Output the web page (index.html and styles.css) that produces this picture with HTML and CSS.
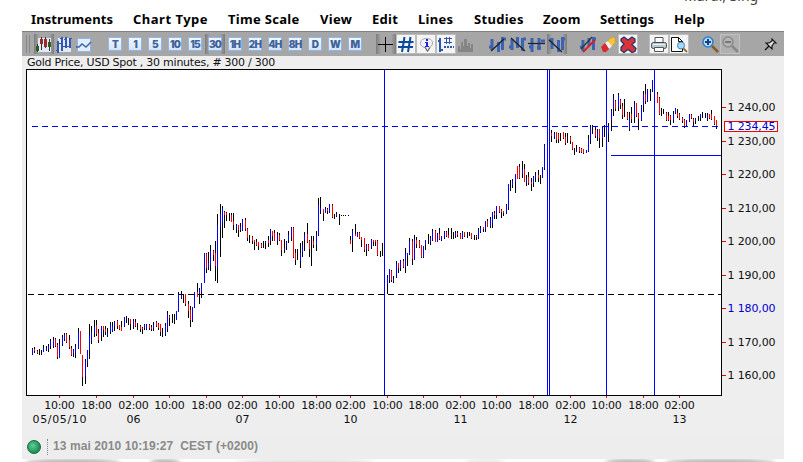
FILE: index.html
```html
<!DOCTYPE html>
<html lang="en">
<head>
  <meta charset="UTF-8" />
  <meta name="viewport" content="width=device-width, initial-scale=1" />
  <title>Gold Price, USD Spot</title>

  <link rel="stylesheet" href="styles.css">
</head>
<body>

  <div class="top-text">Mardi, Sing</div>

  <div class="window">
    <nav class="menu">
      <span class="m1">Instruments</span>
      <span class="m2">Chart Type</span>
      <span class="m3">Time Scale</span>
      <span class="m4">View</span>
      <span class="m5">Edit</span>
      <span class="m6">Lines</span>
      <span class="m7">Studies</span>
      <span class="m8">Zoom</span>
      <span class="m9">Settings</span>
      <span class="m10">Help</span>
    </nav>

    <div class="toolbar">
      <div class="grip"></div>

      <div class="group">
        <div class="tool sunk">
          <svg width="20" height="20" shape-rendering="crispEdges">
            <rect x="4" y="4" width="13" height="14" fill="#dfe9f8" />
            <path d="M3.5 10v8M7.5 3v13M11.5 3v11M15.5 5v12" stroke="#333" />
            <rect x="2" y="12" width="3" height="5" fill="#24601c" />
            <rect x="6" y="5" width="3" height="5" fill="#9c2a2a" />
            <rect x="10" y="5" width="3" height="8" fill="#9c2a2a" />
            <rect x="14" y="8" width="3" height="5" fill="#24601c" />
          </svg>
        </div>
        <div class="tool">
          <svg width="20" height="20" shape-rendering="crispEdges">
            <rect x="4" y="4" width="13" height="14" fill="#dfe9f8" />
            <path d="M4 7v12M8 3v14M12 3v11M16 4v10" stroke="#3458b0" stroke-width="1.600" />
            <path d="M2 16.500h2M4 9.500h3M6 4.500h2M8 12.500h3M10 5.500h2M13 12.500h3M16 4.500h2" stroke="#3458b0" />
          </svg>
        </div>
        <div class="tool">
          <svg width="20" height="20">
            <rect x="3.5" y="4.500" width="13" height="13" fill="#e3eefb" stroke="#8fb4e6" />
            <path d="M2 13l3 0 3-3 4 3 5-5" stroke="#3c65a8" stroke-width="1.4" fill="none" />
          </svg>
        </div>
      </div>

      <div class="group">
        <div class="tool"><b class="key">T</b></div>
        <div class="tool"><b class="key">1</b></div>
        <div class="tool"><b class="key">5</b></div>
        <div class="tool"><b class="key">10</b></div>
        <div class="tool"><b class="key">15</b></div>
        <div class="tool sunk"><b class="key">30</b></div>
        <div class="tool"><b class="key">1H</b></div>
        <div class="tool"><b class="key">2H</b></div>
        <div class="tool"><b class="key">4H</b></div>
        <div class="tool"><b class="key">8H</b></div>
        <div class="tool"><b class="key">D</b></div>
        <div class="tool"><b class="key">W</b></div>
        <div class="tool"><b class="key">M</b></div>
      </div>

      <div class="group">
        <div class="tool sunk">
          <svg width="20" height="20" shape-rendering="crispEdges"><path d="M2 10.500h15M9.500 3v15" stroke="#000" /></svg>
        </div>
        <div class="tool lit">
          <svg width="20" height="20"><path d="M8.500 3L6 18M14.500 3L12 18M2.500 8h15M2 13h15" stroke="#0b4b9c" stroke-width="2" /></svg>
        </div>
        <div class="tool lit">
          <svg width="20" height="20">
            <path d="M10.500 4.500c4 0 6 2 6 4.500s-2 4-3.500 4.500L11.500 17 9 13.500C6 13 4.500 11.500 4.500 9s2-4.500 6-4.500z" fill="#f2f2f6" stroke="#aaa" />
            <path d="M14 13.500l-2.500 4L9 13" fill="none" stroke="#555" />
            <path d="M10 5h2v2h-2zM9 8h3v4h1v1H9v-1h1V9H9z" fill="#1f24e8" />
          </svg>
        </div>
        <div class="tool lit">
          <svg width="20" height="20" shape-rendering="crispEdges">
            <path d="M4 4v14" stroke="#2b56b0" stroke-width="2" />
            <path d="M2 6.500h2M5 15.500h2" stroke="#2b56b0" stroke-width="2" />
            <path d="M10.500 3v7M13.500 3v7M8 4.500h8M8 8.500h8" stroke="#3458a8" />
            <path d="M8 13h10" stroke="#2b56b0" stroke-width="2" stroke-dasharray="2 1" />
          </svg>
        </div>
        <div class="tool">
          <svg width="20" height="20" shape-rendering="crispEdges"><path d="M2 18v-6h2v3h1V8h2v4h1V5h3v7h1V9h2v5h1v-4h2v8z" fill="#858585" /></svg>
        </div>
      </div>

      <div class="group">
        <div class="tool">
          <svg width="20" height="20">
            <path d="M5 5v11M11.500 8v10M15.500 3v13M2 13h3M16 5h3" stroke="#3c62b4" stroke-width="3" />
            <path d="M4 17L17 5" stroke="#222" stroke-width="1.300" />
          </svg>
        </div>
        <div class="tool">
          <svg width="20" height="20">
            <path d="M5 5v11M10.500 3v11M15.500 4v13M2 13h3M16 5h3" stroke="#3c62b4" stroke-width="3" />
            <path d="M4 4l14 13" stroke="#222" stroke-width="1.300" />
          </svg>
        </div>
        <div class="tool">
          <svg width="20" height="20">
            <path d="M5 4v14M12 4v12M2 13h4M10 14h4M14 7h4" stroke="#3c62b4" stroke-width="3" />
            <path d="M1 9.500h17" stroke="#222" stroke-width="1.300" />
          </svg>
        </div>
        <div class="tool sunk">
          <svg width="20" height="20">
            <path d="M5 4v11M11.500 6v12M15.500 3v13M2 6h3M15 5h3" stroke="#3c62b4" stroke-width="3" />
            <path d="M2 6l13 12" stroke="#222" stroke-width="1.300" />
          </svg>
        </div>
      </div>

      <div class="group">
        <div class="tool">
          <svg width="20" height="20">
            <path d="M5 6v11M11 4v8M15.500 3v13M2 13h3M15 5h3" stroke="#3c62b4" stroke-width="3" />
            <path d="M3 15L14 3" stroke="#333" stroke-width="1.200" />
            <path d="M5 18L17 6" stroke="#d32020" stroke-width="1.800" />
          </svg>
        </div>
        <div class="tool">
          <svg width="20" height="20">
            <path d="M10 6l5-3 2 1v5l-4 4z" fill="#f6c634" stroke="#d99a1c" stroke-width=".7" />
            <path d="M7 9l3-2 4 5-3 3z" fill="#f2eef0" />
            <path d="M3 13l4-4 4 6-3 3-3 0z" fill="#d92a30" />
          </svg>
        </div>
        <div class="tool lit">
          <svg width="20" height="20"><path d="M3 5l3-2 4 3 4-3 3 2v3l-3 2.500 4 4-1 3-3 1-4-3-4 3-3-2v-3l3-3.500-3-3z" fill="#d93238" stroke="#24386f" stroke-width="1.300" /></svg>
        </div>
      </div>

      <div class="group">
        <div class="tool lit">
          <svg width="20" height="20">
            <path d="M6 9V3.500h8V9z" fill="#fff" stroke="#555" />
            <rect x="2.500" y="8.500" width="15" height="6" rx="2" fill="#b9cdd0" stroke="#445" />
            <path d="M4 10.500h12" stroke="#e9f4f4" />
            <path d="M5.500 13.500h9v4h-9z" fill="#fff" stroke="#555" />
          </svg>
        </div>
        <div class="tool lit">
          <svg width="20" height="20">
            <path d="M2.500 3.500h7l4 4v10h-11z" fill="#fff" stroke="#111" />
            <path d="M9.500 3.500v4h4" fill="none" stroke="#111" />
            <path d="M14 14l4 4" stroke="#9a6a35" stroke-width="2" />
            <circle cx="12" cy="11.500" r="3.500" fill="#a7d8f5" stroke="#3d82b8" />
          </svg>
        </div>
      </div>

      <div class="group">
        <div class="tool">
          <svg width="20" height="20">
            <path d="M12 12l6 6" stroke="#8a5a20" stroke-width="2.500" />
            <circle cx="8" cy="8" r="5" fill="#b7def8" stroke="#2f7fd0" stroke-width="1.600" />
            <path d="M8 5v6M5 8h6" stroke="#123f86" stroke-width="2" />
          </svg>
        </div>
        <div class="tool off">
          <svg width="20" height="20">
            <path d="M12 12l6 6" stroke="#888" stroke-width="2.500" />
            <circle cx="8" cy="8" r="5" fill="#b4b4b4" stroke="#8c8c8c" stroke-width="1.600" />
            <path d="M5 8h6" stroke="#777" stroke-width="2" />
          </svg>
        </div>
      </div>

      <div class="tool pin">
        <svg width="20" height="20">
          <path d="M5 16l4-4" stroke="#111" stroke-width="1.200" />
          <path d="M6 9l3 0 3-2 0-2 4 4-2 0-2 3 0 3z" fill="#ddd" stroke="#111" stroke-width="1.100" />
        </svg>
      </div>
    </div>

    <div class="chart-title"><span>Gold Price, USD Spot , 30 minutes, # 300 / 300</span></div>

    <svg class="chart" id="chart" width="762" height="365" viewBox="22 69 762 365">
      <rect class="plot" x="26.500" y="69.500" width="695" height="326" />
      <g id="bars" shape-rendering="crispEdges"></g>
      <g shape-rendering="crispEdges">
        <path class="dash" d="M28 294.500H721" />
        <path class="dash blue" d="M32 126.500H718" />
        <path class="line" d="M384.500 70V395M547.500 70V395M549.500 70V395M606.500 70V395M654.500 70V395M611 155.500H721" />
      </g>
      <g id="axes"></g>
      <rect class="last-box" x="724.500" y="121.500" width="53" height="10" />
      <text class="last" x="727.500" y="130" textLength="48">1 234,45</text>
    </svg>

    <footer class="status">
      <span class="lamp"></span>
      <span class="dots"></span>
      <span class="clock">13 mai 2010 10:19:27&nbsp; CEST (+0200)</span>
    </footer>
  </div>

  <div class="shade">
    <i class="s1"></i><i class="s2"></i><i class="s3"></i><i class="s4"></i><i class="s5"></i><i class="s6"></i>
  </div>

  <script src="chart.js"></script>
</body>
</html>
```

FILE: styles.css
```css
body {
  margin: 0;
  height: 462px;
  background: #fff;
  overflow: hidden;
  position: relative;
}

.top-text {
  position: absolute;
  left: 684px;
  top: -14px;
  font: 14px/20px "Noto Sans", sans-serif;
  color: #444;
  white-space: nowrap;
}

.window {
  width: 762px;
  margin-left: 22px;
}

.menu {
  display: flex;
  height: 31px;
  padding: 9px 0 0 9px;
  box-sizing: border-box;
  font: bold 13px/20px "Noto Sans", "Open Sans", sans-serif;
  letter-spacing: 0.3px;
  color: #000;
  white-space: nowrap;
}

.menu span {
  flex: none;
}

.m1 { width: 102px; letter-spacing: 0.1px; }
.m2 { width: 95px; letter-spacing: 0.5px; }
.m3 { width: 92px; }
.m4 { width: 52px; }
.m5 { width: 46px; }
.m6 { width: 56px; }
.m7 { width: 69px; }
.m8 { width: 57px; }
.m9 { width: 74px; letter-spacing: 0.1px; }

.toolbar {
  display: flex;
  height: 25px;
  padding: 2px 4px 0 4px;
  box-sizing: border-box;
  background: #a6a6a6;
  border-top: 1px solid #808080;
  gap: 11px;
}

.grip {
  width: 1px;
  height: 18px;
  margin: 1px -7px 0 0;
  border-left: 1px solid #888;
  border-right: 1px solid #888;
  padding-right: 1px;
}

.group {
  display: flex;
}

.tool {
  width: 20px;
  height: 20px;
  display: flex;
  align-items: center;
  justify-content: center;
}

.sunk {
  background: linear-gradient(to right, #7c7c7c, #a6a6a6 25%, #a6a6a6 75%, #7c7c7c);
}

.lit {
  background: #f4f4f4;
  box-shadow: inset 0 0 0 1px #bcbcbc;
}

.off {
  background: #b0b0b0;
  box-shadow: inset 0 0 0 1px #c0c0c0;
}

.pin {
  margin-left: auto;
}

.key {
  width: 14px;
  height: 14px;
  box-sizing: border-box;
  border: 1px solid #8fb6ea;
  background: linear-gradient(#f3f8ff, #d4e4f8);
  color: #41639a;
  font: 900 10px/12px Inter, "Liberation Sans", sans-serif;
  letter-spacing: -0.8px;
  text-align: center;
  display: flex;
  justify-content: center;
}

.chart-title {
  height: 13px;
  padding-left: 5px;
  background: #eee;
  font: 11px/13px "DejaVu Sans", sans-serif;
  letter-spacing: -0.25px;
  color: #111;
  white-space: nowrap;
}

.chart {
  display: block;
  background: #eee;
}

.chart text {
  font: 11px "DejaVu Sans", sans-serif;
  fill: #111;
}

.chart .blue-label,
.chart .last {
  fill: #0000d0;
}

.plot {
  fill: #fff;
  stroke: #000;
}

.dash {
  fill: none;
  stroke: #000;
  stroke-dasharray: 6 4;
}

.dash.blue,
.line {
  fill: none;
  stroke: #0000ff;
}

.last-box {
  fill: #fff;
  stroke: #f00000;
}

.status {
  display: flex;
  align-items: center;
  height: 25px;
  background: #ededed;
}

.lamp {
  width: 14px;
  height: 14px;
  margin-left: 5px;
  box-sizing: border-box;
  border: 1px solid #0c6b3d;
  border-radius: 50%;
  background: radial-gradient(circle at 40% 40%, #5fd09a, #25955c 60%, #0c7040);
}

.dots {
  height: 16px;
  margin-left: 6px;
  border-left: 1px dotted #888;
}

.clock {
  margin-left: 5px;
  padding-bottom: 2px;
  font: bold 12px/16px "Liberation Sans", Arial, sans-serif;
  letter-spacing: 0.08px;
  color: #8a8a8a;
  white-space: nowrap;
}

.shade {
  display: flex;
  height: 3px;
  overflow: hidden;
}

.shade i {
  height: 8px;
  border-radius: 50%;
  background: #b4b4b4;
  filter: blur(2px);
}

.s1 { width: 95px; margin-left: 25px; }
.s2 { width: 30px; margin-left: 30px; }
.s3 { width: 140px; margin-left: 55px; opacity: 0.4; }
.s4 { width: 40px; margin-left: 90px; opacity: 0.3; }
.s5 { width: 50px; margin-left: 100px; }
.s6 { width: 110px; margin-left: 10px; }
```

FILE: chart.js
```js
const NS = 'http://www.w3.org/2000/svg';

// x high low [bodyTop bodyBottom colour]
const data = `
32 348 355 349 354 b
34 347 353 349 351 r
37 350 354 351 353 r
39 349 355
41 350 355
43 345 352 348 352 b
46 346 351 348 350 b
48 344 352 346 349 b
50 339 349 341 346 b
53 337 348 340 346 b
55 338 347 339 346 r
57 343 359 345 357 r
59 339 358 344 358 b
62 335 346 337 344 b
64 333 341 335 339 b
66 333 343 334 342 r
69 335 349 340 347 r
71 346 356 348 355 r
73 349 357 350 354 b
75 344 358 347 353 b
78 328 349 332 348 b
80 331 354 331 354 r
82 355 386 355 377 r
85 359 384 361 376 b
87 350 367 350 362 b
89 324 359 336 350 b
91 326 344 332 340 b
94 320 337 327 333 b
96 320 336 325 334 r
98 329 343 333 340 r
101 326 341 326 335 b
103 326 337 326 330 r
105 326 335 329 332 r
107 328 337 333 335 b
110 322 334 324 332 b
112 322 332 326 331 b
114 321 331 322 326 b
117 320 329 321 326 r
119 325 330 325 329 r
121 321 331 327 331 r
124 317 327 317 326 b
126 316 323
128 318 325
130 319 330 319 324 r
133 319 329 321 325 b
135 319 327 322 326 r
137 323 330
140 325 332 326 329 r
142 327 334 328 329 r
144 324 330 325 328 b
146 324 330 325 329 b
149 324 330 325 328 r
151 325 331 327 329 r
153 322 331 325 328 b
156 321 327 322 326 r
158 323 330 324 328 r
160 324 336 324 332 r
162 328 337
165 323 336 326 334 b
167 311 332 314 329 b
169 315 326 316 318 r
172 314 323
174 314 324
176 311 320 311 320 b
178 292 312 295 312 b
181 291 299 295 298 b
183 294 303
185 294 306 294 304 r
188 301 318 304 311 r
190 306 327 310 320 r
192 307 322 307 320 b
194 292 308 292 307 b
197 283 297 292 297 r
199 288 304 290 295 b
201 283 298 283 292 b
204 253 283 253 283 b
206 253 273 254 268 r
208 252 270 263 267 b
210 245 271 251 265 b
213 250 261 251 255 r
215 241 281 253 266 r
217 214 283 225 268 b
220 204 257 214 227 b
222 206 238 208 222 b
224 211 228 212 215 r
226 212 221 213 215 r
229 213 221
231 213 222 215 222 r
233 213 230 221 225 r
236 224 233 225 228 b
238 225 237 225 230 r
240 223 232 227 230 b
242 219 231 220 230 b
245 218 231 220 229 r
247 228 241 229 238 r
249 235 243
252 236 244 237 241 r
254 240 250 240 242 r
256 239 246 242 245 r
258 242 250 242 246 r
261 243 248 244 247 r
263 241 248
265 241 249 242 243 b
268 236 247 240 243 r
270 229 245 230 241 b
272 231 241 231 236 r
274 230 241 233 241 r
277 232 245 235 241 b
279 233 241 235 240 r
281 240 256 240 250 r
284 239 253 248 250 b
286 241 250 242 246 b
288 231 243 235 240 b
291 227 241 228 237 b
293 227 258 228 257 r
295 249 265 253 260 r
297 249 260
300 243 268 253 261 b
302 241 257 245 252 b
304 232 251 235 240 b
307 223 243 234 242 r
309 240 257 241 249 r
311 236 266
313 236 248 241 245 r
316 231 251 235 245 b
318 198 236 205 235 b
320 197 214 208 210 b
323 209 221 209 213 r
325 207 213 209 213 b
327 208 214 209 211 r
329 204 213 204 213 b
332 204 218 205 217 r
334 214 219
336 212 217 214 216 b
339 214 225
341 215 216
343 215 216
345 215 216
348 215 216
350 236 244 240 244 r
352 229 252 231 240 b
355 224 236 234 236 r
357 232 237 233 237 b
359 232 239 233 238 r
361 237 247 237 240 r
364 238 252 238 250 r
366 244 256 246 249 b
368 244 251 245 250 r
371 239 249 240 247 b
373 240 246 240 242 r
375 240 246 240 242 r
377 240 256 241 255 r
380 251 257
382 243 256
387 275 294 277 284 b
389 269 283 269 280 b
391 270 282 271 280 r
393 276 283 279 281 b
396 261 278 264 277 b
398 263 273 263 268 r
400 260 271 261 268 b
403 259 268 261 267 r
405 248 273 254 267 b
407 253 266 253 256 b
409 238 255 241 254 b
412 239 265 241 259 r
414 235 260 239 260 b
416 237 248 240 244 r
419 240 248 241 247 r
421 245 258 245 257 r
423 246 258 246 257 b
425 240 250 240 245 b
428 234 244
430 236 245 238 242 b
432 229 241 231 240 b
435 230 242 231 242 r
437 233 242 234 242 b
439 228 240 234 239 r
441 236 241 236 240 b
444 231 239 232 238 b
446 231 237 232 236 r
448 228 238 235 238 r
451 228 239 234 235 b
453 232 239
455 231 238 233 236 b
457 231 237 233 235 r
460 233 239 234 239 r
462 231 239 232 238 b
464 232 237 232 236 r
467 232 238
469 232 236
471 233 239 233 238 r
474 235 240
476 235 240 236 237 r
478 228 239 230 238 b
480 226 233 228 232 b
483 227 232 227 229 r
485 221 232 221 229 b
487 219 227 221 227 r
490 217 228 219 226 b
492 212 228 212 223 b
494 211 219 213 215 r
496 206 219 206 215 b
499 206 213 206 212 r
501 209 218 210 212 r
503 211 216 211 213 r
506 204 214 205 213 b
508 184 210 184 207 b
510 180 191
512 179 188 181 185 b
515 174 193 174 182 b
517 166 179 166 179 r
519 164 179 167 178 r
522 161 178 170 174 b
524 164 182 169 182 r
526 175 186 179 182 b
528 172 185 177 183 r
531 178 191 182 184 r
533 176 187 177 183 b
535 172 182 175 178 b
538 170 182 175 178 r
540 175 184
542 167 178 167 178 b
544 144 170 145 168 b
551 130 142 133 136 r
554 132 139 134 137 b
556 132 143 132 140 r
558 133 143 134 139 r
560 133 141
563 132 139 132 138 r
565 133 145 137 143 r
567 133 143
570 136 144 137 141 r
572 142 150 142 149 r
574 148 155
576 145 152 150 152 b
579 147 153 148 151 r
581 148 153 149 152 r
583 149 154 149 153 r
586 150 153 150 153 b
588 135 152 139 151 b
590 125 144 127 140 b
592 125 134
595 127 138 130 136 r
597 129 141 131 137 b
599 129 148 129 138 r
602 126 147 128 138 b
604 125 137
608 123 142 126 133 b
611 109 131 111 120 b
613 94 116 98 109 b
615 100 111 101 109 r
618 93 111 95 107 b
620 99 109 100 105 r
622 103 119 106 115 r
624 99 117
627 112 120 113 119 r
629 112 131 118 129 b
631 107 123 114 119 r
634 101 123 105 117 b
636 103 117 103 116 r
638 113 130 114 119 r
641 105 121 106 120 b
643 91 112 94 105 b
645 84 104 94 101 r
647 89 102 90 101 b
650 89 101 92 94 b
652 80 92 80 91 b
657 92 103 94 103 r
659 97 115 98 114 r
661 108 116
663 109 114
666 112 121 113 120 r
668 112 121 116 120 r
670 115 125 116 120 r
673 111 123 114 120 b
675 108 114 108 113 b
677 109 118 113 116 r
679 113 120 114 119 r
682 117 123 118 121 r
684 119 128 120 127 r
686 120 127 120 125 b
689 114 122 114 121 b
691 114 119 115 118 r
693 118 126 119 122 r
695 118 124 119 121 b
698 116 121
700 114 121 114 118 b
702 112 118
705 113 118
707 113 121 115 118 b
709 114 119 114 118 r
711 110 120 114 119 r
714 116 125 116 124 r
716 120 129 120 127 r`;

function add(parent, tag, attrs, text) {
  const el = document.createElementNS(NS, tag);
  for (const k in attrs) el.setAttribute(k, attrs[k]);
  if (text) el.textContent = text;
  parent.appendChild(el);
}

const bars = document.getElementById('bars');
for (const row of data.trim().split('\n')) {
  const [x, hi, lo, top, bottom, c] = row.split(' ');
  add(bars, 'rect', { x: x, y: hi, width: 1, height: lo - hi, fill: '#000' });
  if (c) {
    add(bars, 'rect', { x: x, y: top, width: 1, height: bottom - top, fill: c === 'b' ? '#0000ff' : '#ff0000' });
  }
}

const axes = document.getElementById('axes');

// price scale
const prices = [107, 141, 174, 208, 241, 275, 308, 342, 375];
prices.forEach((y, i) => {
  const value = 240 - i * 10;
  add(axes, 'rect', { x: 722, y: y, width: 4, height: 1, fill: '#f00000' });
  add(axes, 'text', { x: 727.5, y: y + 4, textLength: 48, class: value === 180 ? 'blue-label' : '' }, '1 ' + value + ',00');
});

// time scale
const hours = ['10:00', '18:00', '02:00'];
const ticks = [59, 96, 133, 169, 206, 242, 279, 316, 350, 387, 423, 460, 496, 533, 570, 606, 643, 679];
ticks.forEach((x, i) => {
  add(axes, 'rect', { x: x, y: 396, width: 1, height: 2, fill: '#f00000' });
  add(axes, 'text', { x: x + 0.5, y: 409, textLength: 30.5, 'text-anchor': 'middle' }, hours[i % 3]);
});

const days = [[59, '05/05/10', 54], [133, '06', 14], [242, '07', 14], [350, '10', 14], [460, '11', 14], [570, '12', 14], [679, '13', 14]];
for (const [x, label, len] of days) {
  add(axes, 'text', { x: x + 0.5, y: 423, textLength: len, 'text-anchor': 'middle' }, label);
}
```
